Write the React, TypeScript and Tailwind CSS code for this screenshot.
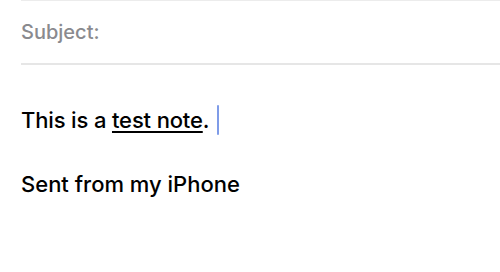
export default function App() {
  return (
    <div className="w-[500px] h-[272px] bg-white overflow-hidden font-['Inter',sans-serif]">
      <div className="ml-[21px] border-t border-[#ececec]">
        <div className="h-[64px] flex items-center border-b-2 border-[#e6e6e6]">
          <span className="text-[20px] font-[550] text-[#8a8a8e]">Subject:</span>
        </div>
        <div className="pt-[40px] text-[22px] font-[550] text-black leading-[28px]">
          <p className="flex items-center">
            <span className="tracking-[-0.15px]">
              This is a <span className="underline underline-offset-[3px] decoration-[1.5px]">test note</span>.
            </span>
            <span className="ml-[8px] inline-block w-[2px] h-[30px] bg-[#7f9ce8] rounded-full" />
          </p>
          <p className="mt-[35px]">Sent from my iPhone</p>
        </div>
      </div>
    </div>
  )
}
